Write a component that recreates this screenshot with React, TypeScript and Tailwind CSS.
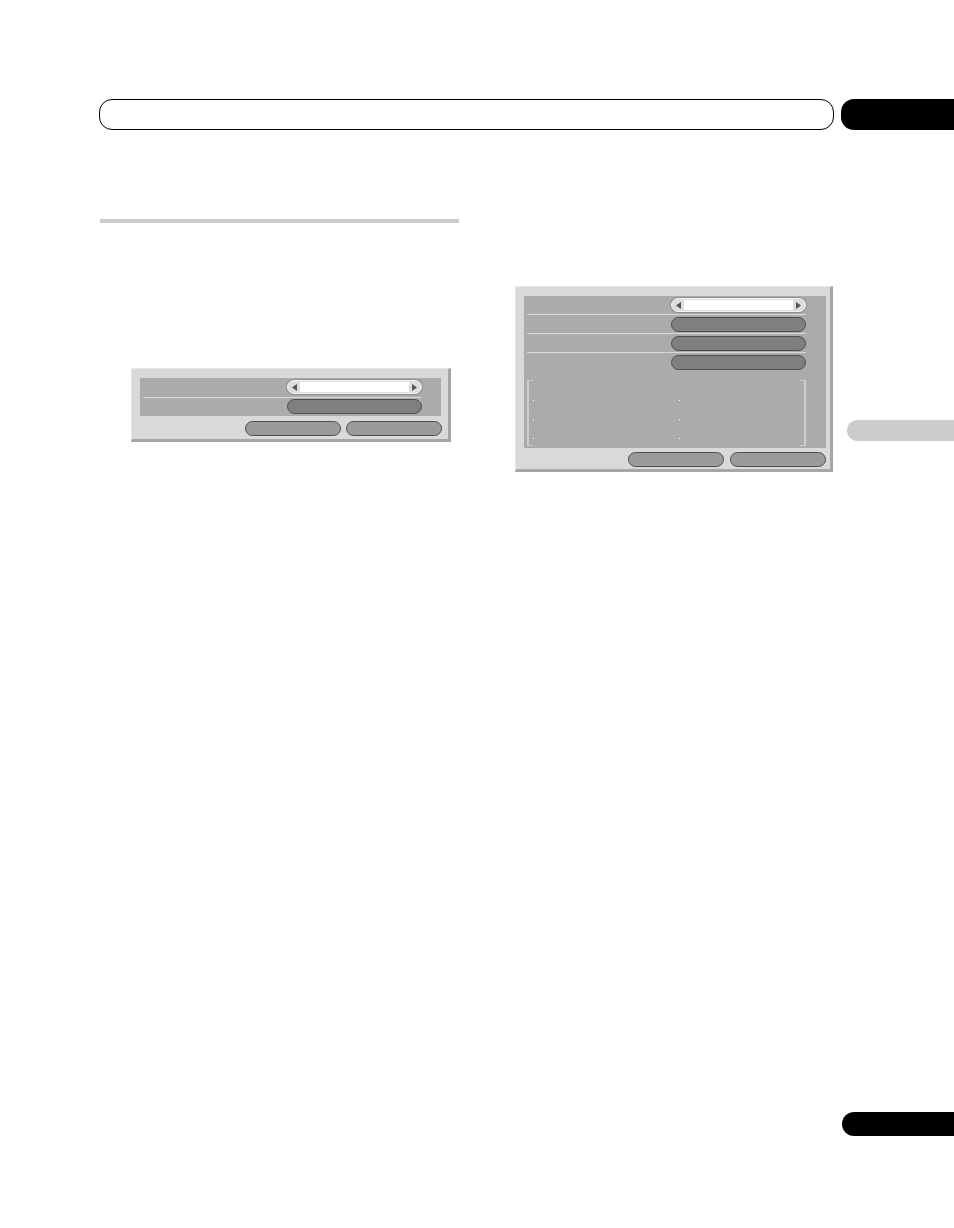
import React from "react";

function Tri({ dir }: { dir: "l" | "r" }) {
  return (
    <svg width="5" height="7" viewBox="0 0 5 7" className="shrink-0">
      {dir === "l" ? (
        <polygon points="5,0 0,3.5 5,7" fill="#555555" />
      ) : (
        <polygon points="0,0 5,3.5 0,7" fill="#555555" />
      )}
    </svg>
  );
}

function SelectPill() {
  return (
    <div className="w-[135px] h-[14px] rounded-full border border-[#f4f4f4] bg-[#dedede] shadow-[0_0_0_1px_#8f8f8f] flex items-center px-[4px] gap-[3px]">
      <Tri dir="l" />
      <div className="flex-1 h-[10px] bg-white" />
      <Tri dir="r" />
    </div>
  );
}

function DarkBtn() {
  return <div className="w-[135px] h-[15px] rounded-full bg-[#7f7f7f] border border-[#4c4c4c]" />;
}

function LowBtn() {
  return <div className="w-[96px] h-[15px] rounded-full bg-[#9b9b9b] border border-[#4f4f4f]" />;
}

function Line() {
  return <div className="h-px bg-[#d9d9d9]" />;
}

function Dots() {
  return (
    <div className="flex flex-col pt-[20px] gap-[18px]">
      <div className="w-px h-px bg-white" />
      <div className="w-px h-px bg-white" />
      <div className="w-px h-px bg-white" />
    </div>
  );
}

function Dialog1() {
  return (
    <div className="w-[320px] h-[74px] bg-[#d9d9d9] border-l border-t border-l-[#e8e8e8] border-t-[#e8e8e8] border-r-[3px] border-b-[3px] border-r-[#a6a6a6] border-b-[#a6a6a6] pl-[8px] pt-[9px] pr-[6px] flex flex-col">
      <div className="w-[301px] h-[38px] bg-[#ababab] pl-[3px] pt-[2px]">
        <div className="w-[279px] flex flex-col">
          <div className="h-[17px] flex justify-end">
            <SelectPill />
          </div>
          <Line />
          <div className="pt-[1px] flex justify-end">
            <DarkBtn />
          </div>
        </div>
      </div>
      <div className="mt-[5px] flex justify-end gap-[5px]">
        <LowBtn />
        <LowBtn />
      </div>
    </div>
  );
}

function Dialog2() {
  return (
    <div className="w-[318px] h-[186px] bg-[#d9d9d9] border-l border-t border-l-[#e8e8e8] border-t-[#e8e8e8] border-r-[3px] border-b-[3px] border-r-[#a6a6a6] border-b-[#a6a6a6] pl-[8px] pt-[9px] pr-[4px] flex flex-col">
      <div className="w-[302px] h-[152px] bg-[#ababab] pl-[3px] pt-[2px]">
        <div className="w-[279px] flex flex-col">
          <div className="h-[16px] flex justify-end">
            <SelectPill />
          </div>
          <Line />
          <div className="h-[18px] pt-[2px] flex justify-end">
            <DarkBtn />
          </div>
          <Line />
          <div className="h-[18px] pt-[2px] flex justify-end">
            <DarkBtn />
          </div>
          <Line />
          <div className="pt-[2px] flex justify-end">
            <DarkBtn />
          </div>
          <div className="mt-[10px] h-[66px] flex">
            <div className="w-[6px] h-full border-l-2 border-t border-b border-[#cdcdcd]" />
            <Dots />
            <div className="ml-[145px]">
              <Dots />
            </div>
            <div className="flex-1" />
            <div className="w-[6px] h-full border-r-2 border-t border-b border-[#cdcdcd]" />
          </div>
        </div>
      </div>
      <div className="mt-[4px] flex justify-end gap-[6px]">
        <LowBtn />
        <LowBtn />
      </div>
    </div>
  );
}

export default function App() {
  return (
    <div className="w-[954px] h-[1228px] bg-white flex flex-col overflow-hidden font-['Liberation_Sans',sans-serif]">
      <div className="mt-[99px] flex">
        <div className="ml-[99px] w-[735px] h-[31px] rounded-[13px] border border-black" />
        <div className="ml-[7px] flex-1 h-[31px] bg-black rounded-l-[13px]" />
      </div>
      <div className="flex items-start">
        <div className="ml-[100px] w-[359px] flex flex-col">
          <div className="mt-[89px] h-[4px] bg-[#cccccc]" />
          <div className="mt-[145px] ml-[31px]">
            <Dialog1 />
          </div>
        </div>
        <div className="ml-[56px] mt-[156px]">
          <Dialog2 />
        </div>
        <div className="ml-[14px] mt-[290px] flex-1 h-[21px] bg-[#cccccc] rounded-l-[10px]" />
      </div>
      <div className="mt-auto mb-[92px] self-end w-[112px] h-[24px] bg-black rounded-l-[12px]" />
    </div>
  );
}
